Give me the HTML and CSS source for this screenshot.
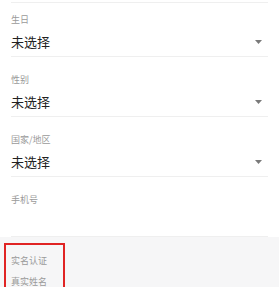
FILE: index.html
```html
<!DOCTYPE html>
<html lang="zh">
<head>
<meta charset="utf-8">
<link rel="stylesheet" href="styles.css">
</head>
<body>
<div class="form">
  <div class="prev"></div>
  <div class="field field--first">
    <div class="label">生日</div>
    <div class="value"><span>未选择</span><svg class="arrow" width="7" height="4" viewBox="0 0 7 4"><path d="M0 0H7L3.5 4Z"/></svg></div>
  </div>
  <div class="field">
    <div class="label">性别</div>
    <div class="value"><span>未选择</span><svg class="arrow" width="7" height="4" viewBox="0 0 7 4"><path d="M0 0H7L3.5 4Z"/></svg></div>
  </div>
  <div class="field">
    <div class="label">国家/地区</div>
    <div class="value"><span>未选择</span><svg class="arrow" width="7" height="4" viewBox="0 0 7 4"><path d="M0 0H7L3.5 4Z"/></svg></div>
  </div>
  <div class="field">
    <div class="label">手机号</div>
    <div class="value"></div>
  </div>
</div>
<div class="section">
  <div class="mark">
    <div class="sec-title">实名认证</div>
    <div class="sec-label">真实姓名</div>
  </div>
</div>
</body>
</html>
```
FILE: styles.css
```css
html, body {
  margin: 0;
  padding: 0;
  background: #f6f6f7;
  font-family: "Noto Sans CJK SC", "Noto Sans", sans-serif;
}
.form {
  background: #fff;
  padding: 0 11px;
}
.prev {
  height: 2px;
  border-bottom: 1px solid #efefef;
}
.field {
  padding: 17px 0 4px;
  border-bottom: 1px solid #efefef;
}
.field--first {
  padding-top: 11px;
}
.label {
  font-size: 9px;
  line-height: 12px;
  color: #9a9a9a;
}
.value {
  margin-top: 6px;
  height: 20px;
  display: flex;
  align-items: center;
  justify-content: space-between;
  font-size: 13px;
  line-height: 20px;
  color: #222;
}
.arrow {
  fill: #7a7a7a;
  margin-right: 6px;
}
.section {
  height: 46px;
  padding-top: 6px;
  overflow: hidden;
}
.mark {
  margin-left: 4px;
  width: 52px;
  border: 2px solid #e02424;
  padding: 10px 0 20px 5px;
}
.sec-title, .sec-label {
  font-size: 9px;
  line-height: 12px;
  color: #9a9a9a;
  white-space: nowrap;
}
.sec-label {
  margin-top: 9px;
}
```
